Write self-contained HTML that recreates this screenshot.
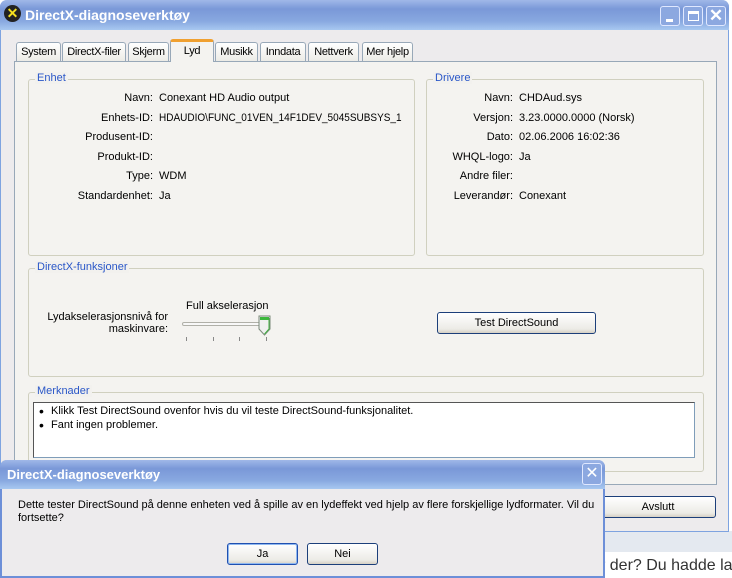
<!DOCTYPE html>
<html><head><meta charset="utf-8"><style>
*{margin:0;padding:0;box-sizing:border-box}
body{width:732px;height:578px;overflow:hidden;position:relative;background:#fff;font-family:"Liberation Sans",sans-serif;font-size:11px;color:#000}
.a{position:absolute;white-space:nowrap}
.r{text-align:right;width:130px}
.grp{position:absolute;border:1px solid #d0d0bf;border-radius:3px}
.gl{position:absolute;top:-8px;left:6px;background:#f2f1ee;color:#2a57c8;padding:0 2px}
.tab{position:absolute;top:42px;height:19px;border:1px solid #98a8b8;border-bottom:none;border-radius:3px 3px 0 0;background:linear-gradient(#fff,#ecebe6);padding-top:3px;text-align:center;white-space:nowrap;letter-spacing:-0.3px}
.btn{position:absolute;border:1px solid #1c3f7a;border-radius:3px;background:linear-gradient(#fff,#ecebe6 80%,#d6d0c5);text-align:center}
</style></head><body>
<!-- background page -->
<div class="a" style="left:0;top:531px;width:732px;height:21px;background:#e4e9f0"></div>
<div class="a" style="left:600px;top:557px;font-size:16px;color:#333">r der? Du hadde last</div>
<!-- main window -->
<div class="a" style="left:0;top:0;width:729px;height:532px;background:#edebed;border:1px solid #7ea3e0;border-top:none;border-radius:7px 7px 0 0"></div>
<div class="a" style="left:0;top:0;width:729px;height:30px;border-radius:7px 7px 0 0;background:linear-gradient(#a0b8e8,#7a98d8 30%,#88a8e0 70%,#a8c8f0)"></div>
<div class="a" style="left:4px;top:5px;width:17px;height:17px;border-radius:50%;background:#222;color:#f4e020;font-weight:bold;font-size:14px;line-height:17px;text-align:center">✕</div>
<div class="a" style="left:25px;top:7px;color:#fff;font-size:14px;font-weight:bold">DirectX-diagnoseverktøy</div>
<div class="a" style="left:660px;top:6px;width:20px;height:20px;border:1px solid #e0e8ff;border-radius:3px;background:#8ca8e0"><div class="a" style="left:5px;top:12px;width:7px;height:3px;background:#fff"></div></div>
<div class="a" style="left:683px;top:6px;width:20px;height:20px;border:1px solid #e0e8ff;border-radius:3px;background:#8ca8e0"><div class="a" style="left:4px;top:4px;width:11px;height:10px;border:1px solid #fff;border-top-width:3px"></div></div>
<div class="a" style="left:706px;top:6px;width:20px;height:20px;border:1px solid #e0e8ff;border-radius:3px;background:#8ca8e0;color:#fff;font-size:17px;line-height:18px;text-align:center;font-weight:bold">✕</div>
<!-- tab panel -->
<div class="a" style="left:14px;top:61px;width:703px;height:424px;background:#f4f3f0;border:1px solid #98a8b8"></div>
<div class="tab" style="left:16px;width:45px">System</div>
<div class="tab" style="left:62px;width:64px">DirectX-filer</div>
<div class="tab" style="left:128px;width:41px">Skjerm</div>
<div class="tab" style="left:170px;top:39px;height:23px;background:#f4f3f0;border-top:3px solid #f0a030;width:44px">Lyd</div>
<div class="tab" style="left:215px;width:43px">Musikk</div>
<div class="tab" style="left:260px;width:46px">Inndata</div>
<div class="tab" style="left:308px;width:51px">Nettverk</div>
<div class="tab" style="left:362px;width:51px">Mer hjelp</div>
<!-- Enhet -->
<div class="grp" style="left:28px;top:79px;width:387px;height:177px"><span class="gl">Enhet</span></div>
<div class="a r" style="left:23px;top:92px">Navn:</div><div class="a" style="left:159px;top:92px">Conexant HD Audio output</div>
<div class="a r" style="left:23px;top:112px">Enhets-ID:</div><div class="a" style="left:159px;top:112px;transform:scaleX(0.91);transform-origin:0 0">HDAUDIO\FUNC_01VEN_14F1DEV_5045SUBSYS_1</div>
<div class="a r" style="left:23px;top:131px">Produsent-ID:</div>
<div class="a r" style="left:23px;top:151px">Produkt-ID:</div>
<div class="a r" style="left:23px;top:170px">Type:</div><div class="a" style="left:159px;top:170px">WDM</div>
<div class="a r" style="left:23px;top:190px">Standardenhet:</div><div class="a" style="left:159px;top:190px">Ja</div>
<!-- Drivere -->
<div class="grp" style="left:426px;top:79px;width:278px;height:177px"><span class="gl">Drivere</span></div>
<div class="a r" style="left:383px;top:92px">Navn:</div><div class="a" style="left:519px;top:92px">CHDAud.sys</div>
<div class="a r" style="left:383px;top:112px">Versjon:</div><div class="a" style="left:519px;top:112px">3.23.0000.0000 (Norsk)</div>
<div class="a r" style="left:383px;top:131px">Dato:</div><div class="a" style="left:519px;top:131px">02.06.2006 16:02:36</div>
<div class="a r" style="left:383px;top:151px">WHQL-logo:</div><div class="a" style="left:519px;top:151px">Ja</div>
<div class="a r" style="left:383px;top:170px">Andre filer:</div>
<div class="a r" style="left:383px;top:190px">Leverandør:</div><div class="a" style="left:519px;top:190px">Conexant</div>
<!-- DirectX-funksjoner -->
<div class="grp" style="left:28px;top:268px;width:676px;height:109px"><span class="gl">DirectX-funksjoner</span></div>
<div class="a" style="left:186px;top:300px">Full akselerasjon</div>
<div class="a" style="left:40px;top:311px;width:128px;text-align:right;line-height:12px;white-space:normal">Lydakselerasjonsnivå for maskinvare:</div>
<div class="a" style="left:182px;top:322px;width:86px;height:4px;border:1px solid #b0b0a8;border-radius:2px;background:#f8f8f8"></div>
<svg class="a" style="left:258px;top:315px" width="14" height="22"><path d="M1 1h11v13l-5.5 6l-5.5-6z" fill="#f0f0f0" stroke="#7a8a7a"/><path d="M2 2h9v3h-9z" fill="#3cb83c"/><path d="M11 3v11l-4.5 5" fill="none" stroke="#40b040"/></svg>
<div class="a" style="left:186px;top:337px;width:1px;height:4px;background:#888"></div>
<div class="a" style="left:213px;top:337px;width:1px;height:4px;background:#888"></div>
<div class="a" style="left:239px;top:337px;width:1px;height:4px;background:#888"></div>
<div class="a" style="left:266px;top:337px;width:1px;height:4px;background:#888"></div>
<div class="btn" style="left:437px;top:312px;width:159px;height:22px;line-height:20px">Test DirectSound</div>
<!-- Merknader -->
<div class="grp" style="left:28px;top:392px;width:676px;height:80px"><span class="gl">Merknader</span></div>
<div class="a" style="left:33px;top:402px;width:662px;height:56px;background:#fff;border:1px solid #7f9db9;border-top-color:#555;border-left-color:#555"></div>
<div class="a" style="left:39px;top:403px;font-size:14px">•</div><div class="a" style="left:51px;top:405px">Klikk Test DirectSound ovenfor hvis du vil teste DirectSound-funksjonalitet.</div>
<div class="a" style="left:39px;top:417px;font-size:14px">•</div><div class="a" style="left:51px;top:419px">Fant ingen problemer.</div>
<div class="btn" style="left:600px;top:496px;width:116px;height:22px;line-height:20px">Avslutt</div>
<!-- dialog -->
<div class="a" style="left:0;top:460px;width:605px;height:118px;background:#edebed;border:2px solid #6d8fd8;border-top:none;border-radius:7px 7px 0 0"></div>
<div class="a" style="left:0;top:460px;width:605px;height:29px;border-radius:7px 7px 0 0;background:linear-gradient(#a0b8e8,#7a98d8 30%,#88a8e0 70%,#a8c8f0)"></div>
<div class="a" style="left:7px;top:467px;color:#fff;font-size:13px;font-weight:bold">DirectX-diagnoseverktøy</div>
<div class="a" style="left:582px;top:463px;width:20px;height:22px;border:1px solid #e0e8ff;border-radius:3px;background:#8ca8e0;color:#fff;font-size:16px;line-height:20px;text-align:center">✕</div>
<div class="a" style="left:18px;top:499px;width:580px;line-height:13px;white-space:normal">Dette tester DirectSound på denne enheten ved å spille av en lydeffekt ved hjelp av flere forskjellige lydformater. Vil du fortsette?</div>
<div class="btn" style="left:227px;top:543px;width:71px;height:22px;line-height:20px;border-color:#2050b0;box-shadow:inset 0 0 0 1px #90b8f0">Ja</div>
<div class="btn" style="left:307px;top:543px;width:71px;height:22px;line-height:20px">Nei</div>
</body></html>
